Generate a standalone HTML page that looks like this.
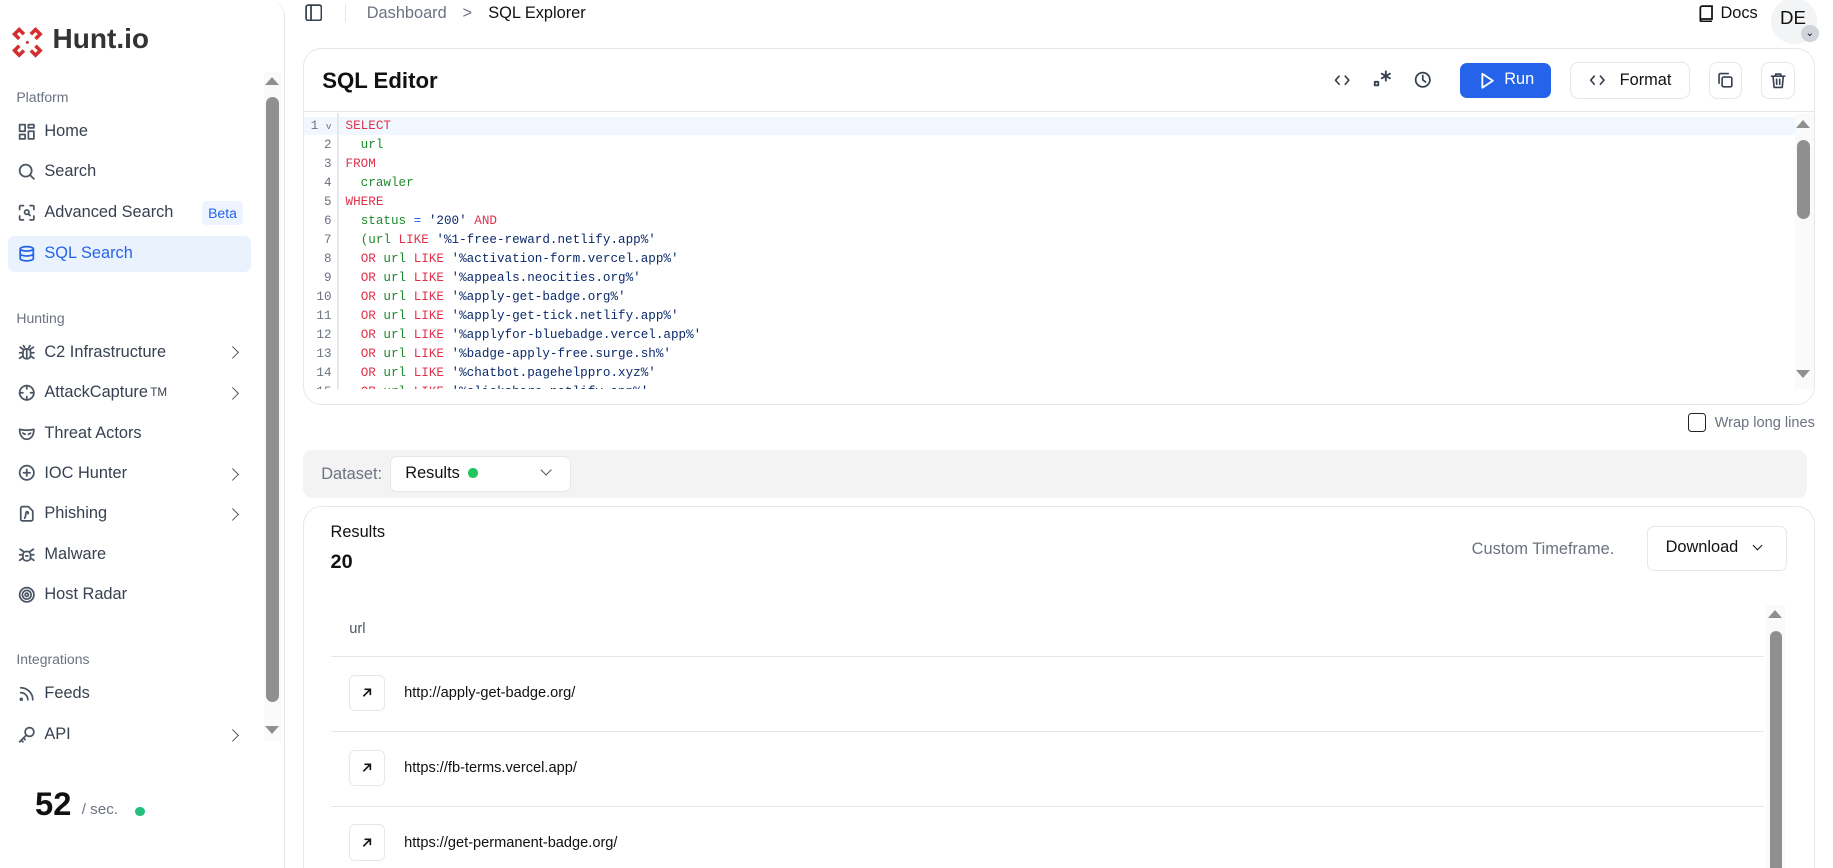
<!DOCTYPE html>
<html><head><meta charset="utf-8">
<style>
*{box-sizing:border-box;margin:0;padding:0}
html,body{width:1833px;height:868px;overflow:hidden;background:#fff}
#root{zoom:1.168;width:1570px;height:744px;position:relative;font-family:"Liberation Sans",sans-serif;color:#111}
.abs{position:absolute}
.side{left:0;top:0;width:244px;height:760px;border:1px solid #e5e7eb;border-radius:14px;border-left:none;border-top:none;background:#fff}
.lbl{position:absolute;left:14px;font-size:12px;color:#6b7280}
.it{position:absolute;left:15px;font-size:14px;color:#374151;display:flex;align-items:center;height:20px}
.it svg{width:15px;height:15px;margin-right:8px;stroke:#4b5563;fill:none;stroke-width:1.6;stroke-linecap:round;stroke-linejoin:round}
.chev{position:absolute;left:195px;width:8px;height:8px;border-right:1.6px solid #4b5563;border-top:1.6px solid #4b5563;transform:rotate(45deg)}
.card{border:1px solid #e5e7eb;border-radius:16px;background:#fff}
.code{position:absolute;left:0;top:3px;width:1276px;font-family:"Liberation Mono",monospace;font-size:10.8px}
.ln{height:16.3px;line-height:16.3px;position:relative;white-space:pre}
.ln .n{position:absolute;right:1252px;width:30px;text-align:right;color:#6b7280}
.ln .c{position:absolute;left:36px}
.k{color:#e0314b}.g{color:#1f8a2e}.s{color:#0b2a6b}.b{color:#2563eb}
.btn{position:absolute;border:1px solid #e5e7eb;border-radius:7px;background:#fff;display:flex;align-items:center;justify-content:center}
.ico{fill:none;stroke:#374151;stroke-width:1.6;stroke-linecap:round;stroke-linejoin:round}
.row{position:absolute;left:283px;width:1227px;height:64px;border-top:1px solid #e5e7eb}
.row .ib{position:absolute;left:16px;top:15px;width:31px;height:31px;border:1px solid #e5e7eb;border-radius:5px;display:flex;align-items:center;justify-content:center}
.row .u{position:absolute;left:63px;top:24px;font-size:12.5px;color:#111}
.sb{position:absolute;background:#8f8f8f;border-radius:7px}
.tri-u{position:absolute;width:0;height:0;border-left:6px solid transparent;border-right:6px solid transparent;border-bottom:7px solid #8f8f8f}
.tri-d{position:absolute;width:0;height:0;border-left:6px solid transparent;border-right:6px solid transparent;border-top:7px solid #8f8f8f}
</style></head><body><div id="root">

<div class="abs side"></div>
<svg class="abs" style="left:9px;top:22px" width="28" height="28" viewBox="0 0 28 28" fill="none" stroke="#d32f2f" stroke-width="3" stroke-linecap="square">
<path d="M3 7 L7 3 M7 3 L10 6 M3 7 L6 10"/><path d="M25 7 L21 3 M21 3 L18 6 M25 7 L22 10"/>
<path d="M3 21 L7 25 M7 25 L10 22 M3 21 L6 18"/><path d="M25 21 L21 25 M21 25 L18 22 M25 21 L22 18"/>
<circle cx="14" cy="14" r="1.3" fill="#d32f2f" stroke="none"/></svg>
<div class="abs" style="left:45px;top:20px;font-size:24px;font-weight:bold;color:#333">Hunt.io</div>

<div class="lbl" style="top:76px">Platform</div>
<div class="it" style="top:103px"><svg viewBox="0 0 16 16"><rect x="1.5" y="1.5" width="5" height="6"/><rect x="9.5" y="1.5" width="5" height="3"/><rect x="9.5" y="7.5" width="5" height="7"/><rect x="1.5" y="10.5" width="5" height="4"/></svg>Home</div>
<div class="it" style="top:137px"><svg viewBox="0 0 16 16"><circle cx="7" cy="7" r="5.5"/><path d="M11 11l3.5 3.5"/></svg>Search</div>
<div class="it" style="top:172px"><svg viewBox="0 0 16 16"><path d="M1.5 5V2.5a1 1 0 0 1 1-1H5M11 1.5h2.5a1 1 0 0 1 1 1V5M14.5 11v2.5a1 1 0 0 1-1 1H11M5 14.5H2.5a1 1 0 0 1-1-1V11"/><circle cx="8" cy="7.5" r="2"/><path d="M9.5 9l1.5 1.5"/></svg>Advanced Search</div>
<div class="abs" style="left:173px;top:172px;width:35px;height:21px;background:#eef4ff;border-radius:4px;font-size:12px;color:#2563eb;text-align:center;line-height:21px">Beta</div>
<div class="abs" style="left:7px;top:202px;width:208px;height:31px;background:#eaf2fe;border-radius:6px"></div>
<div class="it" style="top:207px;color:#2563eb"><svg viewBox="0 0 16 16" style="stroke:#2563eb"><ellipse cx="8" cy="3.5" rx="6" ry="2"/><path d="M2 3.5v9c0 1.1 2.7 2 6 2s6-.9 6-2v-9M2 8c0 1.1 2.7 2 6 2s6-.9 6-2"/></svg>SQL Search</div>

<div class="lbl" style="top:265px">Hunting</div>
<div class="it" style="top:292px"><svg viewBox="0 0 16 16"><rect x="4.5" y="4.5" width="7" height="9" rx="3"/><path d="M8 4.5v9M4.5 8h-3M11.5 8h3M4.5 11l-3 2M11.5 11l3 2M5 5L2 3M11 5l3-2M6 3l-1-1.5M10 3l1-1.5"/></svg>C2 Infrastructure</div><div class="chev" style="top:298px"></div>
<div class="it" style="top:326px"><svg viewBox="0 0 16 16"><circle cx="8" cy="8" r="6.5"/><path d="M8 1.5v3M8 11.5v3M1.5 8h3M11.5 8h3"/></svg>AttackCapture<sup style="font-size:10px;margin-left:2px">TM</sup></div><div class="chev" style="top:333px"></div>
<div class="it" style="top:361px"><svg viewBox="0 0 16 16"><path d="M1.5 4c0 6 3 9 6.5 9s6.5-3 6.5-9c-4 1-9 1-13 0z"/><path d="M4.5 7.5l2 1M11.5 7.5l-2 1"/></svg>Threat Actors</div>
<div class="it" style="top:395px"><svg viewBox="0 0 16 16"><circle cx="8" cy="8" r="6.5"/><path d="M8 5v6M5 8h6"/></svg>IOC Hunter</div><div class="chev" style="top:402px"></div>
<div class="it" style="top:430px"><svg viewBox="0 0 16 16"><path d="M9.5 1.5H4a1.5 1.5 0 0 0-1.5 1.5v10A1.5 1.5 0 0 0 4 14.5h8a1.5 1.5 0 0 0 1.5-1.5V5.5z"/><path d="M6 12c2-2 0-4 2-6 1 0 2 1 1 2"/></svg>Phishing</div><div class="chev" style="top:437px"></div>
<div class="it" style="top:465px"><svg viewBox="0 0 16 16"><rect x="4.5" y="5" width="7" height="8.5" rx="3"/><path d="M4.5 8h-3M11.5 8h3M4.5 11l-3 2M11.5 11l3 2M5 5L2 3M11 5l3-2M7 9h2"/></svg>Malware</div>
<div class="it" style="top:499px"><svg viewBox="0 0 16 16"><circle cx="8" cy="8" r="6.5"/><circle cx="8" cy="8" r="4"/><circle cx="8" cy="8" r="1.5"/></svg>Host Radar</div>

<div class="lbl" style="top:557px">Integrations</div>
<div class="it" style="top:584px"><svg viewBox="0 0 16 16"><path d="M2.5 2.5a11 11 0 0 1 11 11M2.5 7a6.5 6.5 0 0 1 6.5 6.5"/><circle cx="3" cy="13" r=".8"/></svg>Feeds</div>
<div class="it" style="top:619px"><svg viewBox="0 0 16 16"><circle cx="10.5" cy="5.5" r="4"/><path d="M7.5 8.5l-6 6M3 13l1.5 1.5M5 11l1.5 1.5"/></svg>API</div><div class="chev" style="top:626px"></div>

<div class="abs" style="left:226px;top:62px;width:15px;height:572px;background:#fafafa"></div>
<div class="tri-u" style="left:227px;top:66px"></div>
<div class="sb" style="left:228px;top:83px;width:11px;height:518px"></div>
<div class="tri-d" style="left:227px;top:622px"></div>

<div class="abs" style="left:30px;top:672px;font-size:28px;font-weight:bold;color:#111">52</div>
<div class="abs" style="left:70px;top:686px;font-size:13px;color:#6b7280">/ sec.</div>
<div class="abs" style="left:116px;top:691px;width:8px;height:8px;border-radius:50%;background:#22c07a"></div>

<svg class="abs" style="left:261px;top:3px" width="15" height="15" viewBox="0 0 16 16"><rect x="1" y="1" width="14" height="14" rx="2" class="ico" stroke="#111"/><path d="M5.5 1v14" class="ico" stroke="#111"/></svg>
<div class="abs" style="left:295px;top:3px;width:1px;height:16px;background:#e5e7eb"></div>
<div class="abs" style="left:314px;top:3px;font-size:14px;color:#6b7280">Dashboard</div>
<div class="abs" style="left:396px;top:3px;font-size:14px;color:#6b7280">&gt;</div>
<div class="abs" style="left:418px;top:3px;font-size:14px;color:#111">SQL Explorer</div>
<svg class="abs" style="left:1454px;top:4px" width="13" height="15" viewBox="0 0 13 15"><path d="M2 13V2.5A1.5 1.5 0 0 1 3.5 1H12v11H3.5A1.5 1.5 0 0 0 2 13.5 1.5 1.5 0 0 0 3.5 14H12" fill="none" stroke="#111" stroke-width="1.5"/></svg>
<div class="abs" style="left:1473px;top:3px;font-size:14px">Docs</div>
<div class="abs" style="left:1516px;top:-2px;width:40px;height:40px;border-radius:50%;background:#f3f4f6"></div>
<div class="abs" style="left:1524px;top:6px;font-size:16px">DE</div>
<div class="abs" style="left:1542px;top:21px;width:15px;height:15px;border-radius:50%;background:#d1d5db;font-size:9px;text-align:center;line-height:14px">⌄</div>

<div class="abs card" style="left:259px;top:41px;width:1295px;height:306px;overflow:hidden">
  <div class="abs" style="left:16px;top:16px;font-size:19px;font-weight:bold">SQL Editor</div>
  <div class="abs" style="left:0;top:53px;width:1295px;height:1px;background:#e5e7eb"></div>
  <svg class="abs" style="left:882px;top:20px" width="14" height="14" viewBox="0 0 16 16"><path d="M5 4L1.5 8 5 12M11 4l3.5 4-3.5 4" class="ico" stroke="#6b7280"/></svg>
  <svg class="abs" style="left:916px;top:17px" width="16" height="18" viewBox="0 0 16 18"><rect x="1.5" y="11" width="3" height="3" class="ico" stroke="#6b7280"/><path d="M11 2v8M7.5 4l7 4M14.5 4l-7 4" class="ico" stroke="#6b7280"/></svg>
  <svg class="abs" style="left:951px;top:19px" width="15" height="15" viewBox="0 0 16 16"><circle cx="8" cy="8" r="6.5" class="ico" stroke="#6b7280"/><path d="M8 4v4l2.5 2" class="ico" stroke="#6b7280"/></svg>
  <div class="abs" style="left:990px;top:12px;width:78px;height:30px;background:#2563eb;border-radius:6px"></div>
  <svg class="abs" style="left:1007px;top:20px" width="13" height="15" viewBox="0 0 13 15"><path d="M2 1.5l9 6-9 6z" fill="none" stroke="#fff" stroke-width="1.6" stroke-linejoin="round"/></svg>
  <div class="abs" style="left:1028px;top:18px;font-size:14px;color:#fff">Run</div>
  <div class="btn" style="left:1084px;top:11px;width:103px;height:32px;font-size:14px"><svg width="16" height="14" viewBox="0 0 16 16" style="margin-right:11px"><path d="M5 4L1.5 8 5 12M11 4l3.5 4-3.5 4" class="ico" stroke="#111"/></svg>Format</div>
  <div class="btn" style="left:1203px;top:11px;width:29px;height:32px"><svg width="14" height="14" viewBox="0 0 16 16"><rect x="5" y="5" width="9.5" height="9.5" rx="1.5" class="ico" stroke="#111"/><path d="M2 11V3a1.5 1.5 0 0 1 1.5-1.5H11" class="ico" stroke="#111"/></svg></div>
  <div class="btn" style="left:1248px;top:11px;width:29px;height:32px"><svg width="14" height="15" viewBox="0 0 16 16"><path d="M1.5 3.5h13M5.5 3.5V1.5h5v2M3 3.5l1 11h8l1-11M6.5 6.5v5M9.5 6.5v5" class="ico" stroke="#111"/></svg></div>

  <div class="abs" style="left:0;top:55px;width:1295px;height:251px">
    <div class="abs" style="left:0;top:3px;width:1277px;height:16px;background:#f0f7ff"></div>
    <div class="abs" style="left:29px;top:0;width:1px;height:251px;background:#e5e7eb"></div>
    <div class="code">
      <div class="ln"><span class="n">1 <span style="font-size:8px">v</span></span><span class="c k">SELECT</span></div>
      <div class="ln"><span class="n">2</span><span class="c g">  url</span></div>
      <div class="ln"><span class="n">3</span><span class="c k">FROM</span></div>
      <div class="ln"><span class="n">4</span><span class="c g">  crawler</span></div>
      <div class="ln"><span class="n">5</span><span class="c k">WHERE</span></div>
      <div class="ln"><span class="n">6</span><span class="c">  <span class="g">status</span> <span class="b">=</span> <span class="s">'200'</span> <span class="k">AND</span></span></div>
      <div class="ln"><span class="n">7</span><span class="c">  <span class="g">(url</span> <span class="k">LIKE</span> <span class="s">'%1-free-reward.netlify.app%'</span></span></div>
      <div class="ln"><span class="n">8</span><span class="c">  <span class="k">OR</span> <span class="g">url</span> <span class="k">LIKE</span> <span class="s">'%activation-form.vercel.app%'</span></span></div>
      <div class="ln"><span class="n">9</span><span class="c">  <span class="k">OR</span> <span class="g">url</span> <span class="k">LIKE</span> <span class="s">'%appeals.neocities.org%'</span></span></div>
      <div class="ln"><span class="n">10</span><span class="c">  <span class="k">OR</span> <span class="g">url</span> <span class="k">LIKE</span> <span class="s">'%apply-get-badge.org%'</span></span></div>
      <div class="ln"><span class="n">11</span><span class="c">  <span class="k">OR</span> <span class="g">url</span> <span class="k">LIKE</span> <span class="s">'%apply-get-tick.netlify.app%'</span></span></div>
      <div class="ln"><span class="n">12</span><span class="c">  <span class="k">OR</span> <span class="g">url</span> <span class="k">LIKE</span> <span class="s">'%applyfor-bluebadge.vercel.app%'</span></span></div>
      <div class="ln"><span class="n">13</span><span class="c">  <span class="k">OR</span> <span class="g">url</span> <span class="k">LIKE</span> <span class="s">'%badge-apply-free.surge.sh%'</span></span></div>
      <div class="ln"><span class="n">14</span><span class="c">  <span class="k">OR</span> <span class="g">url</span> <span class="k">LIKE</span> <span class="s">'%chatbot.pagehelppro.xyz%'</span></span></div>
      <div class="ln"><span class="n">15</span><span class="c">  <span class="k">OR</span> <span class="g">url</span> <span class="k">LIKE</span> <span class="s">'%clickshare.netlify.app%'</span></span></div>
    </div>
    <div class="abs" style="left:0;top:236px;width:1277px;height:15px;background:#fff"></div>
    <div class="abs" style="left:1277px;top:0;width:16px;height:236px;background:#fafafa"></div>
    <div class="tri-u" style="left:1278px;top:6px"></div>
    <div class="sb" style="left:1279px;top:23px;width:11px;height:68px"></div>
    <div class="tri-d" style="left:1278px;top:220px"></div>
  </div>
</div>

<div class="abs" style="left:1445px;top:354px;width:16px;height:16px;border:1.5px solid #222;border-radius:3px"></div>
<div class="abs" style="left:1468px;top:355px;font-size:12.5px;color:#6b7280">Wrap long lines</div>

<div class="abs" style="left:259px;top:385px;width:1288px;height:41px;background:#f3f3f3;border-radius:8px"></div>
<div class="abs" style="left:275px;top:398px;font-size:14px;color:#6b7280">Dataset:</div>
<div class="abs" style="left:334px;top:390px;width:155px;height:31px;background:#fff;border:1px solid #e5e7eb;border-radius:6px"></div>
<div class="abs" style="left:347px;top:397px;font-size:14px">Results</div>
<div class="abs" style="left:401px;top:401px;width:8px;height:8px;border-radius:50%;background:#22c55e"></div>
<div class="abs" style="left:464px;top:399px;width:7px;height:7px;border-right:1.3px solid #555;border-bottom:1.3px solid #555;transform:rotate(45deg)"></div>

<div class="abs card" style="left:259px;top:433px;width:1295px;height:330px"></div>
<div class="abs" style="left:283px;top:448px;font-size:14px">Results</div>
<div class="abs" style="left:283px;top:472px;font-size:17px;font-weight:bold">20</div>
<div class="abs" style="left:1260px;top:462px;font-size:14px;color:#6b7280">Custom Timeframe.</div>
<div class="abs" style="left:1410px;top:450px;width:120px;height:39px;border:1px solid #e5e7eb;border-radius:6px"></div>
<div class="abs" style="left:1426px;top:461px;font-size:14px">Download</div>
<div class="abs" style="left:1502px;top:464px;width:6px;height:6px;border-right:1.4px solid #111;border-bottom:1.4px solid #111;transform:rotate(45deg)"></div>

<div class="abs" style="left:299px;top:532px;font-size:12.5px;color:#4b5563">url</div>
<div class="row" style="top:562px"><div class="ib"><svg width="10" height="10" viewBox="0 0 10 10"><path d="M2 8L8 2M3 2h5v5" fill="none" stroke="#111" stroke-width="1.4"/></svg></div><div class="u">http://apply-get-badge.org/</div></div>
<div class="row" style="top:626px"><div class="ib"><svg width="10" height="10" viewBox="0 0 10 10"><path d="M2 8L8 2M3 2h5v5" fill="none" stroke="#111" stroke-width="1.4"/></svg></div><div class="u">https://fb-terms.vercel.app/</div></div>
<div class="row" style="top:690px"><div class="ib"><svg width="10" height="10" viewBox="0 0 10 10"><path d="M2 8L8 2M3 2h5v5" fill="none" stroke="#111" stroke-width="1.4"/></svg></div><div class="u">https://get-permanent-badge.org/</div></div>

<div class="abs" style="left:1512px;top:518px;width:16px;height:230px;background:#fafafa"></div>
<div class="tri-u" style="left:1514px;top:522px"></div>
<div class="sb" style="left:1515px;top:540px;width:11px;height:210px"></div>

</div></body></html>
